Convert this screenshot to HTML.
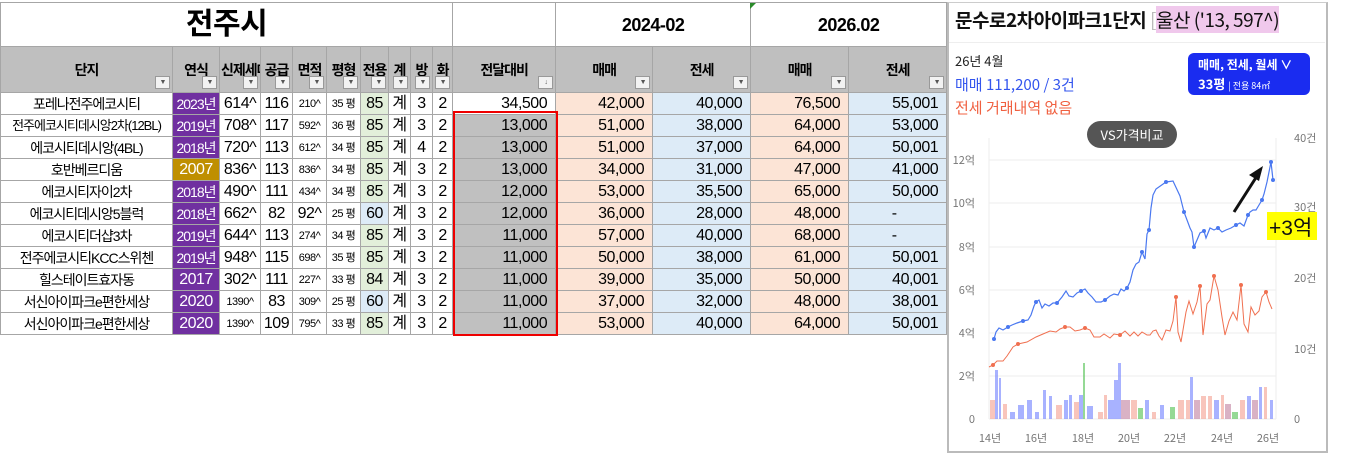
<!DOCTYPE html>
<html><head><meta charset="utf-8"><style>
*{margin:0;padding:0;box-sizing:border-box}
body{width:1351px;height:454px;background:#fff;position:relative;overflow:hidden;font-family:"Liberation Sans","Noto Sans CJK KR",sans-serif}
table{position:absolute;left:0;top:2px;border-collapse:collapse;table-layout:fixed;width:946px}
td{border:1px solid #a6a6a6;height:22px;font-size:16px;line-height:20px;white-space:nowrap;overflow:hidden;padding:0 1px;text-align:center;letter-spacing:-0.5px}
tr.t td{height:44px;font-weight:bold;font-size:18px}
tr.h td{height:46px;background:#bfbfbf;font-weight:bold;font-size:14px;position:relative;vertical-align:middle;letter-spacing:-1px}
.dd{position:absolute;right:2px;bottom:3px;width:15px;height:13px;background:#f2f2f2;border:1px solid #999;font-size:7px;line-height:11px;color:#555}
.p{background:#7030a0;color:#fff}
.g{background:#bf8f00;color:#fff}
.gr{background:#e2efda}
.bl{background:#ddebf7}
.pe{background:#fce4d6}
.gy{background:#c0c0c0}
.r{text-align:right;padding-right:8px}
.sm{font-size:11px}
.nm{font-size:14px;letter-spacing:-1px}
</style></head><body>
<table>
<colgroup><col style="width:172px"><col style="width:47px"><col style="width:41px"><col style="width:32px"><col style="width:34px"><col style="width:34px"><col style="width:28px"><col style="width:22px"><col style="width:22px"><col style="width:20px"><col style="width:103px"><col style="width:97px"><col style="width:98px"><col style="width:98px"><col style="width:98px"></colgroup>
<tr class="t"><td colspan="10" style="font-size:30px">전주시</td><td></td><td colspan="2">2024-02</td><td colspan="2">2026.02</td></tr>
<tr class="h"><td>단지<span class="dd">▼</span></td><td>연식<span class="dd">▼</span></td><td>신제세대<span class="dd">▼</span></td><td>공급<span class="dd">▼</span></td><td>면적<span class="dd">▼</span></td><td>평형<span class="dd">▼</span></td><td>전용<span class="dd">▼</span></td><td>계<span class="dd">▼</span></td><td>방<span class="dd">▼</span></td><td>화<span class="dd">▼</span></td><td>전달대비<span class="dd">↓</span></td><td>매매<span class="dd">▼</span></td><td>전세<span class="dd">▼</span></td><td>매매<span class="dd">▼</span></td><td>전세<span class="dd">▼</span></td></tr>
<tr><td class="nm">포레나전주에코시티</td><td class="p nm">2023년</td><td>614^</td><td>116</td><td class="sm">210^</td><td class="sm">35 평</td><td class="gr">85</td><td>계</td><td>3</td><td>2</td><td class="r">34,500</td><td class="pe r">42,000</td><td class="bl r">40,000</td><td class="pe r">76,500</td><td class="bl r">55,001</td></tr>
<tr><td class="nm" style="font-size:13px">전주에코시티데시앙2차(12BL)</td><td class="p nm">2019년</td><td>708^</td><td>117</td><td class="sm">592^</td><td class="sm">36 평</td><td class="gr">85</td><td>계</td><td>3</td><td>2</td><td class="gy r">13,000</td><td class="pe r">51,000</td><td class="bl r">38,000</td><td class="pe r">64,000</td><td class="bl r">53,000</td></tr>
<tr><td class="nm">에코시티데시앙(4BL)</td><td class="p nm">2018년</td><td>720^</td><td>113</td><td class="sm">612^</td><td class="sm">34 평</td><td class="gr">85</td><td>계</td><td>4</td><td>2</td><td class="gy r">13,000</td><td class="pe r">51,000</td><td class="bl r">37,000</td><td class="pe r">64,000</td><td class="bl r">50,001</td></tr>
<tr><td class="nm">호반베르디움</td><td class="g">2007</td><td>836^</td><td>113</td><td class="sm">836^</td><td class="sm">34 평</td><td class="gr">85</td><td>계</td><td>3</td><td>2</td><td class="gy r">13,000</td><td class="pe r">34,000</td><td class="bl r">31,000</td><td class="pe r">47,000</td><td class="bl r">41,000</td></tr>
<tr><td class="nm">에코시티자이2차</td><td class="p nm">2018년</td><td>490^</td><td>111</td><td class="sm">434^</td><td class="sm">34 평</td><td class="gr">85</td><td>계</td><td>3</td><td>2</td><td class="gy r">12,000</td><td class="pe r">53,000</td><td class="bl r">35,500</td><td class="pe r">65,000</td><td class="bl r">50,000</td></tr>
<tr><td class="nm">에코시티데시앙5블럭</td><td class="p nm">2018년</td><td>662^</td><td>82</td><td>92^</td><td class="sm">25 평</td><td class="bl">60</td><td>계</td><td>3</td><td>2</td><td class="gy r">12,000</td><td class="pe r">36,000</td><td class="bl r">28,000</td><td class="pe r">48,000</td><td class="bl r" style="text-align:center">-</td></tr>
<tr><td class="nm">에코시티더샵3차</td><td class="p nm">2019년</td><td>644^</td><td>113</td><td class="sm">274^</td><td class="sm">34 평</td><td class="gr">85</td><td>계</td><td>3</td><td>2</td><td class="gy r">11,000</td><td class="pe r">57,000</td><td class="bl r">40,000</td><td class="pe r">68,000</td><td class="bl r" style="text-align:center">-</td></tr>
<tr><td class="nm">전주에코시티KCC스위첸</td><td class="p nm">2019년</td><td>948^</td><td>115</td><td class="sm">698^</td><td class="sm">35 평</td><td class="gr">85</td><td>계</td><td>3</td><td>2</td><td class="gy r">11,000</td><td class="pe r">50,000</td><td class="bl r">38,000</td><td class="pe r">61,000</td><td class="bl r">50,001</td></tr>
<tr><td class="nm">힐스테이트효자동</td><td class="p">2017</td><td>302^</td><td>111</td><td class="sm">227^</td><td class="sm">33 평</td><td class="gr">84</td><td>계</td><td>3</td><td>2</td><td class="gy r">11,000</td><td class="pe r">39,000</td><td class="bl r">35,000</td><td class="pe r">50,000</td><td class="bl r">40,001</td></tr>
<tr><td class="nm">서신아이파크e편한세상</td><td class="p">2020</td><td class="sm">1390^</td><td>83</td><td class="sm">309^</td><td class="sm">25 평</td><td class="bl">60</td><td>계</td><td>3</td><td>2</td><td class="gy r">11,000</td><td class="pe r">37,000</td><td class="bl r">32,000</td><td class="pe r">48,000</td><td class="bl r">38,001</td></tr>
<tr><td class="nm">서신아이파크e편한세상</td><td class="p">2020</td><td class="sm">1390^</td><td>109</td><td class="sm">795^</td><td class="sm">33 평</td><td class="gr">85</td><td>계</td><td>3</td><td>2</td><td class="gy r">11,000</td><td class="pe r">53,000</td><td class="bl r">40,000</td><td class="pe r">64,000</td><td class="bl r">50,001</td></tr>
</table>
<div style="position:absolute;left:453px;top:111px;width:105px;height:225px;border:2px solid #e00"></div>
<div style="position:absolute;left:750px;top:3px;width:0;height:0;border-top:6px solid #2a8a2a;border-right:6px solid transparent"></div>

<div style="position:absolute;left:947px;top:2px;width:381px;height:451px;border:2px solid #bbb;border-top:1px solid #ccc;background:#fff"></div>
<div style="position:absolute;left:955px;top:6px;font-size:19px;font-weight:bold;font-family:'Noto Sans CJK KR',sans-serif;letter-spacing:-0.5px;white-space:nowrap;color:#111">문수로2차아이파크1단지 <span style="font-weight:normal;color:#bbb">[</span><span style="background:#f0c8ec;font-weight:normal">울산 ('13, 597^)</span></div>
<div style="position:absolute;left:949px;top:42px;width:376px;border-top:1px solid #eee"></div>
<div style="position:absolute;left:955px;top:51px;font-size:13px;font-family:'Noto Sans CJK KR',sans-serif;color:#222">26년 4월</div>
<div style="position:absolute;left:955px;top:74px;font-size:15px;font-family:'Noto Sans CJK KR',sans-serif;color:#3355ee">매매 111,200 / 3건</div>
<div style="position:absolute;left:955px;top:97px;font-size:15px;font-family:'Noto Sans CJK KR',sans-serif;color:#f06040">전세 거래내역 없음</div>
<div style="position:absolute;left:1188px;top:53px;width:122px;height:42px;background:#1a2cf0;border-radius:6px;color:#fff;font-family:'Noto Sans CJK KR',sans-serif;font-weight:bold">
<div style="position:absolute;left:10px;top:3px;font-size:12px">매매, 전세, 월세 ∨</div>
<div style="position:absolute;left:10px;top:21px;font-size:13px">33평 <span style="font-size:9px;font-weight:normal">| 전용 84㎡</span></div></div>
<div style="position:absolute;left:1087px;top:121px;width:90px;height:27px;background:#555;border-radius:14px;color:#fff;font-size:13px;text-align:center;line-height:27px;font-family:'Noto Sans CJK KR',sans-serif">VS가격비교</div>

<svg style="position:absolute;left:0;top:0" width="1351" height="454" font-family="Noto Sans CJK KR,sans-serif" font-size="11" fill="#777">
<g stroke="#eee" stroke-width="1">
<line x1="989" y1="160" x2="1276" y2="160"/><line x1="989" y1="203" x2="1276" y2="203"/><line x1="989" y1="247" x2="1276" y2="247"/><line x1="989" y1="290" x2="1276" y2="290"/><line x1="989" y1="333" x2="1276" y2="333"/><line x1="989" y1="376" x2="1276" y2="376"/><line x1="989" y1="419" x2="1276" y2="419"/>
<line x1="989" y1="138" x2="989" y2="419"/><line x1="1276" y1="138" x2="1276" y2="419"/></g>
<g text-anchor="end"><text x="975" y="164">12억</text><text x="975" y="207">10억</text><text x="975" y="251">8억</text><text x="975" y="294">6억</text><text x="975" y="337">4억</text><text x="975" y="380">2억</text><text x="975" y="423">0</text></g>
<text x="1294" y="142">40건</text><text x="1294" y="211">30건</text><text x="1294" y="282">20건</text><text x="1294" y="353">10건</text><text x="1294" y="423">0</text>
<g text-anchor="middle"><text x="990" y="442">14년</text><text x="1036" y="442">16년</text><text x="1083" y="442">18년</text><text x="1129" y="442">20년</text><text x="1175" y="442">22년</text><text x="1222" y="442">24년</text><text x="1268" y="442">26년</text></g>
<g opacity="0.6">
<rect x="990" y="400" width="6" height="19" fill="#f4a090"/><rect x="995" y="370" width="3" height="49" fill="#7080ff"/><rect x="999" y="378" width="2" height="41" fill="#7080ff"/><rect x="1003" y="404" width="4" height="15" fill="#f4a090"/>
<rect x="1010" y="412" width="5" height="7" fill="#7080ff"/><rect x="1018" y="405" width="6" height="14" fill="#7080ff"/><rect x="1027" y="400" width="5" height="19" fill="#7080ff"/><rect x="1035" y="412" width="4" height="7" fill="#7080ff"/><rect x="1043" y="390" width="3" height="29" fill="#7080ff"/><rect x="1049" y="396" width="3" height="23" fill="#7080ff"/><rect x="1056" y="405" width="6" height="14" fill="#f4a090"/><rect x="1064" y="400" width="4" height="19" fill="#7080ff"/><rect x="1069" y="395" width="3" height="24" fill="#7080ff"/><rect x="1074" y="402" width="5" height="17" fill="#f4a090"/><rect x="1079" y="395" width="4" height="24" fill="#7080ff"/><rect x="1083" y="363" width="2" height="56" fill="#50c050"/><rect x="1087" y="406" width="6" height="13" fill="#7080ff"/><rect x="1098" y="412" width="5" height="7" fill="#f4a090"/>
<rect x="1104" y="395" width="3" height="24" fill="#f4a090"/><rect x="1108" y="400" width="6" height="19" fill="#7080ff"/><rect x="1114" y="380" width="4" height="39" fill="#7080ff"/><rect x="1118" y="363" width="3" height="56" fill="#7080ff"/><rect x="1121" y="400" width="9" height="19" fill="#c080a0"/><rect x="1131" y="400" width="6" height="19" fill="#f4a090"/><rect x="1138" y="408" width="5" height="11" fill="#50c050"/><rect x="1145" y="400" width="4" height="19" fill="#7080ff"/><rect x="1152" y="412" width="4" height="7" fill="#f4a090"/><rect x="1160" y="405" width="4" height="14" fill="#7080ff"/><rect x="1170" y="407" width="5" height="12" fill="#50c050"/><rect x="1178" y="400" width="6" height="19" fill="#f4a090"/><rect x="1186" y="400" width="4" height="19" fill="#f4a090"/><rect x="1190" y="377" width="3" height="42" fill="#7080ff"/><rect x="1194" y="400" width="6" height="19" fill="#c080a0"/><rect x="1201" y="396" width="5" height="23" fill="#f4a090"/><rect x="1208" y="396" width="4" height="23" fill="#f4a090"/><rect x="1214" y="400" width="5" height="19" fill="#7080ff"/><rect x="1221" y="395" width="3" height="24" fill="#f4a090"/><rect x="1225" y="404" width="6" height="15" fill="#c080a0"/><rect x="1232" y="412" width="6" height="7" fill="#50c050"/><rect x="1240" y="400" width="5" height="19" fill="#f4a090"/><rect x="1247" y="396" width="4" height="23" fill="#7080ff"/><rect x="1252" y="400" width="6" height="19" fill="#c080a0"/><rect x="1259" y="387" width="3" height="32" fill="#7080ff"/><rect x="1264" y="387" width="3" height="32" fill="#f4a090"/><rect x="1270" y="400" width="3" height="19" fill="#7080ff"/>
</g>
<polyline fill="none" stroke="#f07050" stroke-width="1" points="989,367 993,365 997,361 1003,361 1007,356 1013,347 1018,344 1027,342 1036,337 1043,334 1050,331 1056,332 1060,329 1065,327 1070,327 1075,331 1080,330 1085,328 1090,330 1094,337 1100,337 1104,334 1110,338 1114,334 1120,335 1125,331 1130,336 1134,332 1138,336 1142,332 1147,335 1150,335 1153,331 1156,330 1159,336 1162,340 1166,330 1170,331 1173,321 1176,297 1178,332 1181,342 1186,312 1189,301 1193,314 1197,302 1200,286 1203,335 1207,304 1210,300 1214,276 1218,290 1222,317 1225,335 1229,321 1233,312 1237,320 1241,285 1244,324 1248,332 1251,307 1255,315 1259,311 1262,297 1266,292 1269,302 1272,309"/>
<g fill="#f07050"><circle cx="993" cy="365" r="2"/><circle cx="1018" cy="344" r="2"/><circle cx="1065" cy="327" r="2"/><circle cx="1085" cy="328" r="2"/><circle cx="1120" cy="335" r="2"/><circle cx="1176" cy="297" r="2"/><circle cx="1200" cy="286" r="2"/><circle cx="1214" cy="276" r="2"/><circle cx="1241" cy="285" r="2"/><circle cx="1266" cy="292" r="2"/></g>
<polyline fill="none" stroke="#4a78f0" stroke-width="1.2" points="994,339 996,332 999,328 1003,330 1008,327 1012,325 1017,323 1023,321 1028,320 1031,315 1034,306 1036,302 1039,300 1042,308 1045,304 1049,306 1053,303 1057,303 1062,297 1066,291 1069,296 1073,297 1077,293 1081,291 1085,289 1088,293 1092,297 1096,302 1101,302 1105,300 1110,296 1114,294 1118,295 1121,289 1124,291 1127,288 1130,282 1133,270 1136,264 1139,262 1142,252 1145,259 1147,234 1149,230 1151,208 1153,195 1156,189 1166,182 1173,181 1180,196 1184,212 1190,228 1192,232 1194,247 1197,240 1200,233 1204,231 1206,238 1210,228 1214,230 1218,228 1222,232 1226,230 1231,228 1236,225 1240,223 1244,226 1248,215 1250,212 1253,210 1256,210 1259,205 1262,200 1264,194 1267,182 1271,162 1273,180"/>
<g fill="#4a78f0"><circle cx="994" cy="339" r="2"/><circle cx="1008" cy="327" r="2"/><circle cx="1023" cy="321" r="2"/><circle cx="1036" cy="302" r="2"/><circle cx="1057" cy="303" r="2"/><circle cx="1081" cy="291" r="2"/><circle cx="1105" cy="300" r="2"/><circle cx="1127" cy="288" r="2"/><circle cx="1142" cy="252" r="2"/><circle cx="1149" cy="230" r="2"/><circle cx="1166" cy="182" r="2"/><circle cx="1184" cy="212" r="2"/><circle cx="1194" cy="247" r="2"/><circle cx="1204" cy="231" r="2"/><circle cx="1218" cy="228" r="2"/><circle cx="1236" cy="225" r="2"/><circle cx="1248" cy="215" r="2"/><circle cx="1262" cy="200" r="2"/><circle cx="1271" cy="162" r="2"/><circle cx="1273" cy="180" r="2"/></g>
<line x1="1234" y1="212" x2="1257" y2="176" stroke="#111" stroke-width="3"/>
<polygon points="1263,166 1249,175 1259,181" fill="#111"/>
<rect x="1267" y="212" width="50" height="28" fill="#ffff00"/>
<text x="1269" y="235" font-size="21" fill="#111" font-family="Liberation Sans,Noto Sans CJK KR,sans-serif">+3억</text>
</svg>
</body></html>
